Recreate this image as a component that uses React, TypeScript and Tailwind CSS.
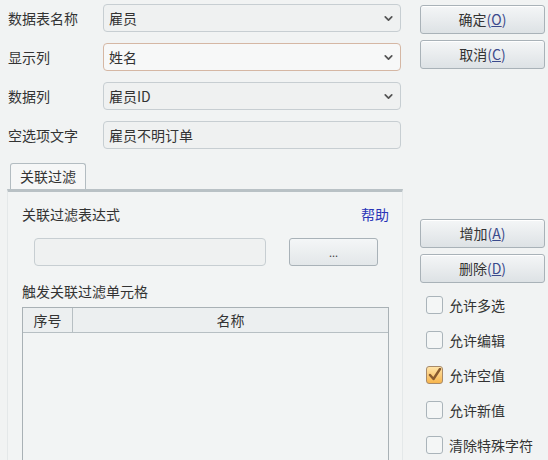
import { ChevronDown } from 'lucide-react'

const font = { fontFamily: '"Noto Sans CJK SC", "Noto Sans", sans-serif' }

const Btn = ({ label, mnem, className = '' }: { label: string; mnem: string; className?: string }) => (
  <button
    className={`h-[29px] w-[125px] rounded-[3px] border border-[#a9b2b8] bg-gradient-to-b from-[#f4f6f7] via-[#e9ecee] to-[#dde2e5] text-[14px] text-[#333] shadow-[inset_0_1px_0_#fff] ${className}`}
  >
    {label}
    <span className="text-[#3b4a8c]">
      (<span className="underline">{mnem}</span>)
    </span>
  </button>
)

const Check = ({ label, checked = false }: { label: string; checked?: boolean }) => (
  <div className="flex h-[18px] items-center gap-[6px]">
    {checked ? (
      <span className="flex h-[18px] w-[17px] items-center justify-center rounded-[3px] border border-[#a88a6a] bg-gradient-to-b from-[#ffe3a6] to-[#f7b54a]">
        <svg width="14" height="14" viewBox="0 0 14 14">
          <path d="M2 7 L5.5 11 L12 1" fill="none" stroke="#8a5a2e" strokeWidth="2.4" strokeLinecap="round" strokeLinejoin="round" />
        </svg>
      </span>
    ) : (
      <span className="h-[18px] w-[17px] rounded-[3px] border border-[#aab4ba] bg-[#f4f6f6]" />
    )}
    <span className="text-[14px] leading-[18px] text-[#333]">{label}</span>
  </div>
)

const Field = ({ label, value, select = false, focus = false }: { label: string; value: string; select?: boolean; focus?: boolean }) => (
  <div className="flex h-[28px] items-center">
    <span className="w-[103px] shrink-0 pl-[8px] text-[14px] text-[#333]">{label}</span>
    <div
      className={`flex h-full w-[298px] items-center justify-between rounded-[4px] border pl-[5px] pr-[5px] text-[14px] text-[#333] ${
        focus ? 'border-[#d5b7a4] bg-[#f7f8f8]' : 'border-[#c7ced2] bg-[#eff1f1]'
      }`}
    >
      <span>{value}</span>
      {select && <ChevronDown size={13} strokeWidth={3.2} className="text-[#555]" />}
    </div>
  </div>
)

export default function App() {
  return (
    <div className="flex h-[460px] w-[548px] overflow-hidden bg-[#f1f3f3]" style={font}>
      <div className="flex w-[403px] shrink-0 flex-col">
        <div className="mt-[4px] flex flex-col gap-[11px]">
          <Field label="数据表名称" value="雇员" select />
          <Field label="显示列" value="姓名" select focus />
          <Field label="数据列" value="雇员ID" select />
          <Field label="空选项文字" value="雇员不明订单" />
        </div>

        <div className="ml-[10px] mt-[14px] flex h-[26px] w-[76px] items-center justify-center rounded-t-[3px] border border-b-0 border-[#b3bcc1] bg-[#f6f7f7] text-[14px] text-[#333]">
          关联过滤
        </div>
        <div className="ml-[7px] flex flex-1 flex-col border-x border-t-[3px] border-[#e4e8e9] border-t-[#b9c1c5] bg-[#f2f4f4] pl-[14px] pr-[13px]">
          <div className="mt-[12px] flex h-[20px] items-center justify-between text-[14px]">
            <span className="text-[#333]">关联过滤表达式</span>
            <span className="text-[#2a35b8]">帮助</span>
          </div>
          <div className="mt-[14px] flex h-[28px] items-center">
            <div className="ml-[12px] h-full w-[232px] rounded-[4px] border border-[#c7ced2] bg-[#eff1f1]" />
            <button className="ml-[23px] h-full w-[89px] rounded-[3px] border border-[#a9b2b8] bg-gradient-to-b from-[#f4f6f7] to-[#e3e7e9] text-[11px] leading-none text-[#444]">
              ...
            </button>
          </div>
          <div className="mt-[15px] h-[20px] text-[14px] leading-[20px] text-[#333]">触发关联过滤单元格</div>
          <div className="mt-[6px] flex flex-1 flex-col border border-b-0 border-[#a9b1b5] bg-[#f2f4f4]">
            <div className="flex h-[25px] border-b border-[#b7bfc3] bg-[#eceff0] text-[14px] text-[#333]">
              <div className="flex w-[50px] items-center justify-center border-r border-[#b7bfc3]">序号</div>
              <div className="flex flex-1 items-center justify-center">名称</div>
            </div>
          </div>
        </div>
      </div>

      <div className="ml-[17px] flex flex-col">
        <Btn label="确定" mnem="O" className="mt-[5px]" />
        <Btn label="取消" mnem="C" className="mt-[6px]" />
        <Btn label="增加" mnem="A" className="mt-[150px]" />
        <Btn label="删除" mnem="D" className="mt-[6px]" />
        <div className="ml-[6px] mt-[13px] flex flex-col gap-[17px]">
          <Check label="允许多选" />
          <Check label="允许编辑" />
          <Check label="允许空值" checked />
          <Check label="允许新值" />
          <Check label="清除特殊字符" />
        </div>
      </div>
    </div>
  )
}
